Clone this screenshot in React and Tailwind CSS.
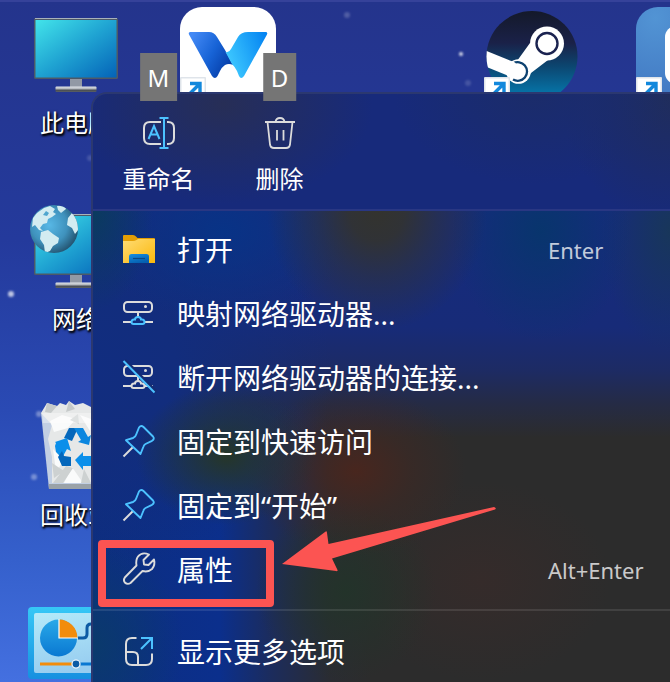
import React from 'react';

const MonitorShape = ({ id }) => (
  <>
    <defs>
      <linearGradient id={`${id}-screen`} x1="0" y1="0" x2="1" y2="1">
        <stop offset="0" stopColor="#42e4ea" />
        <stop offset="0.5" stopColor="#1fa3d2" />
        <stop offset="1" stopColor="#0463b8" />
      </linearGradient>
      <linearGradient id={`${id}-base`} x1="0" y1="0" x2="0" y2="1">
        <stop offset="0" stopColor="#e2e5ea" />
        <stop offset="0.5" stopColor="#a9adb3" />
        <stop offset="0.6" stopColor="#45494e" />
        <stop offset="1" stopColor="#5b6066" />
      </linearGradient>
    </defs>
    <rect x="42" y="71" width="12" height="10" fill="#9299a5" />
    <rect x="27.5" y="79.5" width="41" height="5.5" rx="1" fill={`url(#${id}-base)`} />
    <rect x="6" y="11" width="84" height="61" rx="1.5" fill="#4d5966" />
    <path d="M7 11.5H89" stroke="#a8b2ba" strokeWidth="1" />
    <rect x="7.5" y="13" width="81" height="57.5" fill={`url(#${id}-screen)`} />
  </>
);

const ShortcutBadge = () => (
  <>
    <rect x="0" y="70" width="26" height="26" rx="1" fill="#dfe4ea" />
    <rect x="1.5" y="71.5" width="23" height="24" fill="#fff" />
    <path d="M10 76.5H20V86.5M19.5 77L8 88.5" fill="none" stroke="#1288dc" strokeWidth="3.4" />
  </>
);

const ThisPcIcon = () => (
  <svg viewBox="0 0 96 96" className="size-24">
    <MonitorShape id="pc" />
  </svg>
);

const NetworkIcon = () => (
  <svg viewBox="0 0 96 96" className="size-24">
    <defs>
      <radialGradient id="globe" cx="0.4" cy="0.42" r="0.62">
        <stop offset="0" stopColor="#58b8e6" />
        <stop offset="0.6" stopColor="#3f92bd" />
        <stop offset="1" stopColor="#245572" />
      </radialGradient>
      <clipPath id="globe-clip">
        <circle cx="26" cy="26" r="24" />
      </clipPath>
    </defs>
    <MonitorShape id="net" />
    <circle cx="26" cy="26" r="24" fill="url(#globe)" />
    <g clipPath="url(#globe-clip)" fill="#d3ecf1">
      <path d="M5 15L9 10L16 5L22 3L27 6L25 9L28 11L24 14L20 16L19 20L15 21L12 25L15 28L11 27L7 22L4 24Z" />
      <path d="M29 3L36 2L38 6L33 10L30 7Z" />
      <path d="M13 29L20 27L25 31L31 35L30 40L25 43L22 48L17 50L16 42L12 36Z" />
      <path d="M40 15L44 10L50 16L51 26L47 31L44 25L39 22Z" />
      <path d="M18 8L21 10L19 13L15 12Z" fill="#4fa6ce" />
    </g>
  </svg>
);

const RecycleBinIcon = () => (
  <svg viewBox="0 0 96 96" className="size-24">
    <path d="M13 14H83L75 90H21Z" fill="#c2cfe3" />
    <path d="M13 14L19 4L29 7L32 4L38 6L41 2L47 6L55 4L63 8L70 3L77 8L83 14L77 70L73 84H24L24 58L20 40L24 26Z" fill="#e6e8e8" />
    <path d="M19 4L29 7L23 14L17 13ZM41 2L47 10L38 13ZM70 3L77 14L63 13Z" fill="#c6caca" />
    <path d="M22 22L34 16L48 20L40 29L26 33ZM25 50L36 62L28 72ZM44 68L55 84H36ZM52 16L63 20L62 32Z" fill="#fafbfb" />
    <path d="M24 64L36 72L26 79ZM38 67L45 69L35 84H25ZM56 70L63 84H53ZM50 15L42 21L51 25Z" fill="#cdd1d1" />
    <path d="M14 14H82V24H15Z" fill="#fff" opacity="0.35" />
    <path d="M20.500 85H75.500L75 90H21Z" fill="#9aa2a8" />
    <path d="M36 39L41 29H50L44 42Z" fill="#0567bb" />
    <path d="M46 29H55L60 38L63 36L61 46L50 43L53 41Z" fill="#0a86df" />
    <path d="M27 47L28 44L27 43L39 39L43 52L39 50L34 59L28 53Z" fill="#0a8fea" />
    <path d="M30 58L34 52L36 57L43 58V67H34Z" fill="#0567bb" />
    <path d="M47 61L55 53V57H66L70 61L65 67H55V71Z" fill="#0a8fea" />
  </svg>
);

const ControlPanelIcon = () => (
  <svg viewBox="0 0 96 96" className="size-24">
    <defs>
      <linearGradient id="cp-frame" x1="0" y1="0" x2="0" y2="1">
        <stop offset="0" stopColor="#36c8f6" />
        <stop offset="1" stopColor="#1690e0" />
      </linearGradient>
      <linearGradient id="cp-inner" x1="0" y1="0" x2="0.3" y2="1">
        <stop offset="0" stopColor="#b4eaf9" />
        <stop offset="1" stopColor="#97cdf0" />
      </linearGradient>
      <linearGradient id="cp-pie" x1="0" y1="0" x2="0" y2="1">
        <stop offset="0" stopColor="#29a9e8" />
        <stop offset="1" stopColor="#0a78d2" />
      </linearGradient>
    </defs>
    <rect x="0" y="12" width="96" height="72" rx="4" fill="url(#cp-frame)" />
    <rect x="6" y="18" width="84" height="60" rx="2" fill="url(#cp-inner)" />
    <circle cx="30.500" cy="43" r="18.500" fill="url(#cp-pie)" />
    <path d="M31 43V24.500A18.500 18.500 0 0 1 49.500 43Z" fill="#f28c0c" />
    <path d="M31 24V43H49.500" fill="none" stroke="#fff" strokeWidth="1.200" />
    <path d="M50 43H55Q59 43 59 39V33Q59 29 63 29H80" fill="none" stroke="#0c5ba4" strokeWidth="3" />
    <path d="M12 69H47" stroke="#f28c0c" strokeWidth="3" />
    <path d="M48 69H84" stroke="#0a78d2" strokeWidth="3" />
    <circle cx="48" cy="69" r="4" fill="#0c5ba4" stroke="#fff" strokeWidth="1.200" />
  </svg>
);

const WAppIcon = () => (
  <svg viewBox="0 0 96 96" className="size-24">
    <defs>
      <linearGradient id="w-left" x1="0" y1="0.2" x2="1" y2="0.8">
        <stop offset="0" stopColor="#4389f5" />
        <stop offset="0.5" stopColor="#1763d6" />
        <stop offset="1" stopColor="#0237a0" />
      </linearGradient>
      <linearGradient id="w-right" x1="0" y1="0.6" x2="1" y2="0.2">
        <stop offset="0" stopColor="#40cbff" />
        <stop offset="1" stopColor="#0585f2" />
      </linearGradient>
    </defs>
    <rect width="96" height="110" rx="22" fill="#fff" />
    <path d="M10.500 25H29Q34 25 37 30L45 43L53 58Q49 56 45 58Q42 60 40 64L37.500 69Q35 73 32 69L9 27.500Q8 25 10.500 25Z" fill="url(#w-left)" />
    <path d="M85.500 25H68Q61 25 58 30L51 42Q49 46 45.500 45L52 57Q55 60 57 64L59 69Q61 73 64 69L87 27.500Q88 25 85.500 25Z" fill="url(#w-right)" />
    <ShortcutBadge />
  </svg>
);

const SteamIcon = () => (
  <svg viewBox="0 0 96 96" className="size-24">
    <defs>
      <linearGradient id="steam-bg" x1="0" y1="0" x2="0" y2="1">
        <stop offset="0" stopColor="#14192a" />
        <stop offset="0.350" stopColor="#1a2148" />
        <stop offset="0.6" stopColor="#0c456f" />
        <stop offset="1" stopColor="#0482b8" />
      </linearGradient>
      <clipPath id="steam-clip">
        <circle cx="48" cy="49.500" r="45.500" />
      </clipPath>
    </defs>
    <circle cx="48" cy="49.500" r="45.500" fill="url(#steam-bg)" />
    <g clipPath="url(#steam-clip)">
      <path d="M46 36L33 54L40 74L47 66L64 53Z" fill="#fff" />
      <circle cx="63" cy="36.500" r="17" fill="#fff" />
      <circle cx="63" cy="36.500" r="10.500" fill="#fff" stroke="#1b2350" strokeWidth="2.400" />
      <circle cx="34.500" cy="64.500" r="12.300" fill="#fff" />
      <path d="M29 56.500A9.300 9.300 0 1 1 29 72.500" fill="none" stroke="#0d4270" strokeWidth="2.300" />
      <path d="M0 43L31 55.500L36 62L33 69L27 70L0 59Z" fill="#fff" />
    </g>
    <ShortcutBadge />
  </svg>
);

const BlueAppIcon = () => (
  <svg viewBox="0 0 96 96" className="size-24">
    <defs>
      <radialGradient id="blue-app" cx="0.2" cy="0.1" r="1">
        <stop offset="0" stopColor="#5294d4" />
        <stop offset="1" stopColor="#3c6fbd" />
      </radialGradient>
    </defs>
    <rect width="96" height="110" rx="22" fill="url(#blue-app)" />
    <rect x="29" y="19" width="56" height="58" rx="11" fill="#fff" />
    <ShortcutBadge />
  </svg>
);

const RenameIcon = () => (
  <svg viewBox="0 0 32 32" className="size-8" fill="none" strokeWidth="2">
    <path d="M18 5H7Q1 5 1 11V21Q1 27 7 27H18M24 5H25Q31 5 31 11V21Q31 27 25 27H24" stroke="#dcdcdc" />
    <path d="M5.500 22L11 9L16.500 22M7.500 17.500H14.500" stroke="#4cc2ff" />
    <path d="M16.500 1H25.500M21 1V31M16.500 31H25.500" stroke="#4cc2ff" />
  </svg>
);

const DeleteIcon = () => (
  <svg viewBox="0 0 32 32" className="size-8" fill="none" stroke="#dcdcdc" strokeWidth="1.800">
    <path d="M1 5H31M11.500 5Q12 1 16 1Q20 1 20.500 5" />
    <path d="M3.500 5L6 27.500Q6.500 31 10 31H22Q25.500 31 26 27.500L28.500 5" />
    <path d="M13 13V23.500M19.500 13V23.500" />
  </svg>
);

const FolderIcon = () => (
  <svg viewBox="0 0 32 32" className="size-8">
    <defs>
      <linearGradient id="folder" x1="0" y1="0" x2="1" y2="1">
        <stop offset="0" stopColor="#ffdc74" />
        <stop offset="1" stopColor="#fbb80c" />
      </linearGradient>
      <linearGradient id="folder-clip" x1="0" y1="0" x2="0.500" y2="1">
        <stop offset="0" stopColor="#1590e4" />
        <stop offset="1" stopColor="#0560b0" />
      </linearGradient>
    </defs>
    <path d="M0 1Q0 0 1 0H10Q12 0 13 1.500L14.500 3H31Q32 3 32 4V12H0Z" fill="#e39e04" />
    <path d="M0 6H10Q12 6 13.500 5L15 4H32V28H0Z" fill="url(#folder)" />
    <path d="M6 28V21.500Q6 19 8.500 19H23.500Q26 19 26 21.500V28Z" fill="url(#folder-clip)" />
    <path d="M10 23.500H22" stroke="#0a4885" strokeWidth="1.200" />
  </svg>
);

const DriveShape = ({ accent }) => (
  <>
    <rect x="1" y="3" width="28" height="10" rx="3.500" stroke="#dcdcdc" />
    <circle cx="22.500" cy="7.500" r="1.500" fill="#dcdcdc" stroke="none" />
    <path d="M15 13V18M0 23H8M22 23H30" stroke="#dcdcdc" />
    <path d="M10.500 25Q8.500 25 8.500 23Q8.500 20.500 11 20.500H12Q12 18 15 18Q18 18 18 20.500H19Q21.500 20.500 21.500 23Q21.500 25 19.500 25Z" stroke={accent} />
  </>
);

const MapDriveIcon = () => (
  <svg viewBox="0 0 32 32" className="size-8" fill="none" strokeWidth="2">
    <DriveShape accent="#4cc2ff" />
  </svg>
);

const DisconnectDriveIcon = () => (
  <svg viewBox="0 0 32 32" className="size-8 overflow-visible" fill="none" strokeWidth="2">
    <DriveShape accent="#dcdcdc" />
    <path d="M2 -3L33.500 28.500" stroke="#152c72" strokeWidth="2.500" />
    <path d="M0.500 -2L31.500 29.500" stroke="#4cc2ff" />
  </svg>
);

const PinIcon = () => (
  <svg viewBox="0 0 32 32" className="size-8 overflow-visible" fill="none" strokeWidth="1.900" strokeLinejoin="round">
    <path d="M10 20L0.500 29.500" stroke="#dcdcdc" />
    <path d="M16 0.500Q18 -2 20.500 0L30 9.500Q32 12 29 13.800L22.500 17Q20.800 18 20.300 20L17.500 27L3 13.200L10 11Q12.500 10 13.200 7.500Z" stroke="#4cc2ff" />
  </svg>
);

const WrenchIcon = () => (
  <svg viewBox="0 0 32 32" className="size-8 overflow-visible" fill="none" stroke="#dcdcdc" strokeWidth="1.900" strokeLinejoin="round">
    <path d="M26 -0.500Q19 -3.500 15 1.500Q12.500 5 13.500 10.500L1.800 22.500Q0 25 1.800 27.500Q4.500 30 7.500 28L19.500 16Q25 17.500 29 14Q32.500 10 31 4.500L25.500 10L21 9.500L20.500 5Z" />
  </svg>
);

const MoreOptionsIcon = () => (
  <svg viewBox="0 0 32 32" className="size-8" fill="none" strokeWidth="2">
    <path d="M13.500 1H9Q3 1 3 7V22Q3 28 9 28H23Q29 28 29 22V16.500M3 15H10Q15 15 15 20V28" stroke="#dcdcdc" />
    <path d="M18 1H29V12M29 1L18 12" stroke="#4cc2ff" />
  </svg>
);

const desktopIcons = [
  { Icon: ThisPcIcon, label: '此电脑', cell: 'col-start-1 row-start-1' },
  { Icon: NetworkIcon, label: '网络', cell: 'col-start-1 row-start-2' },
  { Icon: RecycleBinIcon, label: '回收站', cell: 'col-start-1 row-start-3' },
  { Icon: ControlPanelIcon, cell: 'col-start-1 row-start-4' },
  { Icon: WAppIcon, cell: 'col-start-2 row-start-1' },
  { Icon: SteamIcon, cell: 'col-start-4 row-start-1' },
  { Icon: BlueAppIcon, cell: 'col-start-5 row-start-1' },
];

const toolbarItems = [
  { label: '重命名', accessKey: 'M', Icon: RenameIcon },
  { label: '删除', accessKey: 'D', Icon: DeleteIcon },
];

const menuItems = [
  { label: '打开', shortcut: 'Enter', Icon: FolderIcon },
  { label: '映射网络驱动器...', Icon: MapDriveIcon },
  { label: '断开网络驱动器的连接...', Icon: DisconnectDriveIcon },
  { label: '固定到快速访问', Icon: PinIcon },
  { label: '固定到“开始”', Icon: PinIcon },
  { label: '属性', shortcut: 'Alt+Enter', Icon: WrenchIcon, marked: true },
];

const stars = [
  { x: 347, y: 15, r: 3, o: 0.2 },
  { x: 461, y: 54, r: 2, o: 0.8 },
  { x: 468, y: 83, r: 3, o: 0.15 },
  { x: 90, y: 158, r: 3, o: 0.15 },
  { x: 11, y: 294, r: 3, o: 0.7 },
  { x: 39, y: 414, r: 3, o: 0.35 },
  { x: 34, y: 477, r: 3, o: 0.35 },
];

const MenuItem = ({ label, shortcut, Icon, marked }) => (
  <button type="button" className="relative flex h-16 w-full items-center pl-[30px] text-left">
    <Icon />
    <span className="ml-[22px] flex-1 whitespace-nowrap pb-[2px] text-[28px] leading-10 text-white">{label}</span>
    {shortcut && <span className="w-[122px] pb-[2px] text-[22px] leading-8 text-white/75">{shortcut}</span>}
    {marked && (
      <span className="absolute left-[5px] top-px h-[67px] w-44 rounded-[4px] border-8 border-[#fc5452]" />
    )}
  </button>
);

const ContextMenu = () => (
  <div className="absolute left-[91px] right-0 top-[92px] rounded-tl-2xl border-l-2 border-t-2 border-[#2b3870]">
    {/* Toolbar */}
    <div className="flex gap-3 rounded-tl-[14px] bg-[#172a7b] bg-[radial-gradient(150px_100px_at_130px_10px,#272e56,transparent),radial-gradient(140px_90px_at_440px_0px,#1b2c6a,transparent),radial-gradient(110px_130px_at_100%_0px,#202d5b,transparent)] pb-[6px] pl-[11px] pt-2">
      {toolbarItems.map(({ label, accessKey, Icon }) => (
        <button
          key={label}
          type="button"
          className="relative flex w-[109px] flex-col items-center gap-[14px] pb-2 pt-[15px]"
        >
          <span className="absolute -top-[49px] left-1/2 flex h-12 -translate-x-1/2 items-center bg-[#757575] px-2 pt-[2px] text-[24px] text-white">
            {accessKey}
          </span>
          <Icon />
          <span className="text-[24px] leading-8 text-white">{label}</span>
        </button>
      ))}
    </div>

    {/* Menu entries over the blurred backdrop */}
    <div className="border-t-2 border-[#293783] bg-[#2c2c2c] bg-[radial-gradient(110px_120px_at_284px_0px,#33332e,#33332ee6_25%,#33332e80_55%,transparent),radial-gradient(90px_110px_at_448px_20px,#08356d,transparent),radial-gradient(70px_120px_at_100%_20px,#18365a,transparent),radial-gradient(60px_100px_at_0px_0px,#0a3b5e,transparent),radial-gradient(130px_90px_at_130px_20px,#083386,transparent),radial-gradient(90px_70px_at_133px_244px,#263627,#26362780_50%,transparent),radial-gradient(110px_85px_at_263px_260px,#48261e,#48261e66_50%,transparent),radial-gradient(90px_110px_at_0px_435px,#0a3a6c,transparent),radial-gradient(90px_90px_at_253px_380px,#23332a,transparent),radial-gradient(130px_100px_at_388px_370px,#352b2a,transparent),radial-gradient(240px_200px_at_0px_160px,#112d80,#122d7d_35%,transparent),linear-gradient(to_bottom,#162b7e,#172b78_24%,#1d2b64_33%,#252b45_40%,transparent_47%),linear-gradient(to_right,#0d2e80,#0b2f8c_22%,#1c2c5c_31%,#2a2c32_41%,#2c2c2c_48%)]">
      <div className="pb-[6px] pt-2">
        {menuItems.map((item) => (
          <MenuItem key={item.label} {...item} />
        ))}
      </div>
      <div className="border-t-2 border-white/10 pb-2 pt-[10px]">
        <MenuItem label="显示更多选项" Icon={MoreOptionsIcon} />
      </div>
    </div>
  </div>
);

const App = () => {
  return (
    <div className="relative h-screen overflow-hidden border-t-2 border-[#36429a] bg-[linear-gradient(to_bottom,#24348c,#243a9c_35%,#2a4ab4_60%,#3560cc_82%,#4470e0)] font-['Noto_Sans','Noto_Sans_CJK_SC',sans-serif]">
      <svg className="absolute -top-[2px] left-0 size-full" fill="#fff">
        {stars.map((star) => (
          <circle key={`${star.x}-${star.y}`} cx={star.x} cy={star.y} r={star.r} opacity={star.o} className="blur-[1px]" />
        ))}
      </svg>

      <div className="relative -mt-[2px] grid auto-cols-[152px] auto-rows-[196px]">
        {desktopIcons.map(({ Icon, label, cell }) => (
          <div key={cell} className={`flex w-[152px] flex-col items-center gap-1 pt-[7px] ${cell}`}>
            <Icon />
            {label && (
              <span className="text-[24px] leading-8 text-white [text-shadow:1px_1px_3px_#000,1px_2px_2px_#000]">
                {label}
              </span>
            )}
          </div>
        ))}
      </div>

      <div className="absolute inset-x-0 -top-[2px]">
        <ContextMenu />
        {/* Arrow pointing at the marked entry */}
        <svg className="absolute left-[280px] top-[505px] h-[68px] w-[220px]" viewBox="280 505 220 68" fill="#fc5452">
          <path d="M282 564L325 532Q327 530 327 533L328.500 544L494 507Q497 508 495 509.500L332 558.500L337.500 570Q338 571.500 336 571Z" />
        </svg>
      </div>
    </div>
  );
};

export default App;
